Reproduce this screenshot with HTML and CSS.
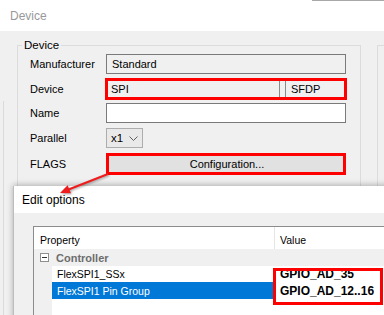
FILE: index.html
```html
<!DOCTYPE html>
<html>
<head>
<meta charset="utf-8">
<link rel="stylesheet" href="styles.css">
</head>
<body>
<div class="screen">
  <div class="win">
    <div class="titlebar"><span class="title">Device</span></div>
    <div class="winbody">
      <fieldset class="group">
        <legend>Device</legend>
        <div class="row">
          <span class="lbl">Manufacturer</span>
          <div class="field ro">Standard</div>
        </div>
        <div class="row tall">
          <span class="lbl">Device</span>
          <div class="mark devbox">
            <div class="sub spi">SPI</div>
            <div class="sub sfdp">SFDP</div>
          </div>
        </div>
        <div class="row">
          <span class="lbl">Name</span>
          <div class="field edit"></div>
        </div>
        <div class="row">
          <span class="lbl">Parallel</span>
          <div class="combo">x1
            <svg class="chev" width="9" height="6" viewBox="0 0 9 6"><polyline points="0.5,0.5 4.5,4.5 8.5,0.5" fill="none" stroke="#606060" stroke-width="1"/></svg>
          </div>
        </div>
        <div class="row tall">
          <span class="lbl">FLAGS</span>
          <div class="mark btn">Configuration...</div>
        </div>
      </fieldset>
      <div class="group2"></div>
    </div>
  </div>

  <div class="dialog">
    <div class="dtitle">Edit options</div>
    <div class="dbody">
      <div class="grid">
        <div class="ghead">
          <div class="hcell prop">Property</div>
          <div class="hcell val">Value</div>
        </div>
        <div class="cat">
          <span class="minus"></span>
          <span class="catname">Controller</span>
        </div>
        <div class="grow">
          <div class="gutter"></div>
          <div class="pcell">FlexSPI1_SSx</div>
          <div class="vcell">GPIO_AD_35</div>
        </div>
        <div class="grow sel">
          <div class="gutter"></div>
          <div class="pcell">FlexSPI1 Pin Group</div>
          <div class="vcell">GPIO_AD_12..16</div>
        </div>
        <div class="grow empty">
          <div class="gutter"></div>
          <div class="pcell"></div>
          <div class="vcell"></div>
        </div>
      </div>
    </div>
  </div>

  <div class="valmark"></div>

  <svg class="arrow" width="384" height="315" viewBox="0 0 384 315">
    <g class="arrowg">
      <line x1="108" y1="174" x2="68" y2="189.8" stroke="#ee1c1c" stroke-width="2"/>
      <polygon points="60,193 71,193.2 67.6,185.2" fill="#ee1c1c"/>
    </g>
  </svg>
</div>
</body>
</html>
```

FILE: styles.css
```css
* { box-sizing: border-box; }
html, body { margin: 0; padding: 0; }
body {
  width: 384px;
  height: 315px;
  overflow: hidden;
  font-family: "Liberation Sans", Arial, sans-serif;
  font-size: 11px;
  color: #000;
}
.screen {
  position: relative;
  width: 384px;
  height: 315px;
  overflow: hidden;
  background: #f0f0f0;
}
.win {
  width: 384px;
  height: 315px;
  display: flex;
  flex-direction: column;
}
.titlebar {
  height: 31px;
  background: #fff;
  display: flex;
  align-items: center;
  padding-left: 10px;
  position: relative;
}
.titlebar::before {
  content: "";
  position: absolute;
  top: 0;
  left: 312px;
  right: 0;
  height: 1px;
  background: #a8a8a8;
}
.title {
  font-size: 12px;
  color: #999;
  margin-top: 1px;
}
.winbody {
  flex: 1;
  background: #f0f0f0;
  display: flex;
  align-items: flex-start;
  padding-left: 17px;
  padding-top: 7px;
  gap: 16px;
  position: relative;
}
.winbody::before {
  content: "";
  position: absolute;
  left: 3px;
  top: 70px;
  bottom: 0;
  width: 1px;
  background: #dadada;
}
.group {
  margin: 0;
  width: 344px;
  height: 260px;
  border: 1px solid #dcdcdc;
  padding: 2px 0 0 12px;
  display: flex;
  flex-direction: column;
  gap: 4px;
}
.group legend {
  padding: 0 2px;
  margin-left: -8px;
  font-size: 11.5px;
  line-height: 14px;
}
.group2 {
  flex: 1;
  height: 260px;
  margin-top: 7px;
  border-left: 1px solid #dcdcdc;
  border-top: 1px solid #dcdcdc;
}
.row {
  display: flex;
  align-items: center;
  height: 20px;
}
.row.tall { height: 22px; }
.row:nth-of-type(3) { margin-top: -1px; }
.row:nth-of-type(4) { margin-top: 1px; }
.row:nth-of-type(5) { margin-top: 1px; }
.lbl {
  width: 76px;
  flex: none;
}
.field {
  width: 240px;
  height: 20px;
  border: 1px solid #7a7a7a;
  display: flex;
  align-items: center;
  padding-left: 5px;
}
.field.ro { background: #f0f0f0; }
.field.edit { background: #fff; }
.mark {
  border: 3px solid #ff0000;
}
.devbox {
  width: 242px;
  height: 22px;
  margin-left: -1px;
  display: flex;
  background: #f0f0f0;
}
.sub {
  display: flex;
  align-items: center;
  height: 100%;
}
.spi {
  width: 172px;
  padding-left: 3px;
  border-right: 1px solid #8a8a8a;
}
.sfdp {
  flex: 1;
  margin-left: 5px;
  border-left: 1px solid #8a8a8a;
  padding-left: 5px;
}
.combo {
  width: 37px;
  height: 20px;
  border: 1px solid #adadad;
  background: #e9e9e9;
  display: flex;
  align-items: center;
  padding-left: 4px;
  gap: 6px;
  font-size: 11.5px;
}
.chev { margin-top: 1px; }
.btn {
  width: 240px;
  height: 22px;
  background: #e1e1e1;
  display: flex;
  align-items: center;
  justify-content: center;
  padding-left: 2px;
}

.dialog {
  position: absolute;
  left: 13px;
  top: 186px;
  width: 400px;
  height: 160px;
  background: #f0f0f0;
  border-left: 1px solid #bdbdbd;
  box-shadow: 0 -1px 6px rgba(0,0,0,0.28);
  display: flex;
  flex-direction: column;
}
.dtitle {
  height: 31px;
  background: #fff;
  font-size: 12px;
  display: flex;
  align-items: center;
  padding-left: 8px;
}
.dbody {
  flex: 1;
  padding: 13px 0 0 19px;
}
.grid {
  border-left: 1px solid #8c8c8c;
  border-top: 1px solid #8c8c8c;
  background: #fff;
  height: 120px;
  font-size: 10.5px;
}
.ghead {
  height: 22px;
  display: flex;
  background: #fff;
}
.hcell {
  display: flex;
  align-items: center;
  padding-top: 4px;
}
.hcell.prop {
  width: 241px;
  padding-left: 6px;
  border-right: 1px solid #e5e5e5;
}
.hcell.val {
  padding-left: 5px;
}
.cat {
  height: 17px;
  background: #f0f0f0;
  display: flex;
  align-items: center;
  padding-left: 6px;
}
.minus {
  width: 9px;
  height: 9px;
  border: 1px solid #8e8f8f;
  background: #fff;
  position: relative;
  margin-right: 7px;
}
.minus::after {
  content: "";
  position: absolute;
  left: 1px;
  right: 1px;
  top: 3px;
  height: 1px;
  background: #333;
}
.catname {
  font-weight: bold;
  color: #6d6d6d;
  font-size: 11px;
}
.grow {
  display: flex;
  height: 16px;
}
.grow.sel { height: 17px; }
.grow.empty { height: 30px; }
.gutter {
  width: 18px;
  background: #f0f0f0;
}
.pcell {
  width: 223px;
  display: flex;
  align-items: center;
  padding-left: 5px;
  background: #fff;
}
.grow.sel .pcell {
  background: #0078d7;
  color: #fff;
}
.vcell {
  flex: 1;
  display: flex;
  align-items: center;
  padding-left: 4px;
  font-weight: bold;
  font-size: 12px;
  background: #fff;
  border-left: 1px solid #fff;
}
.valmark {
  position: absolute;
  left: 273px;
  top: 268px;
  width: 110px;
  height: 37px;
  border: 3px solid #ff0000;
}
.arrow {
  position: absolute;
  left: 0;
  top: 0;
  pointer-events: none;
}
.arrowg {
  filter: drop-shadow(1px 1px 1px rgba(0,0,0,0.35));
}
```
